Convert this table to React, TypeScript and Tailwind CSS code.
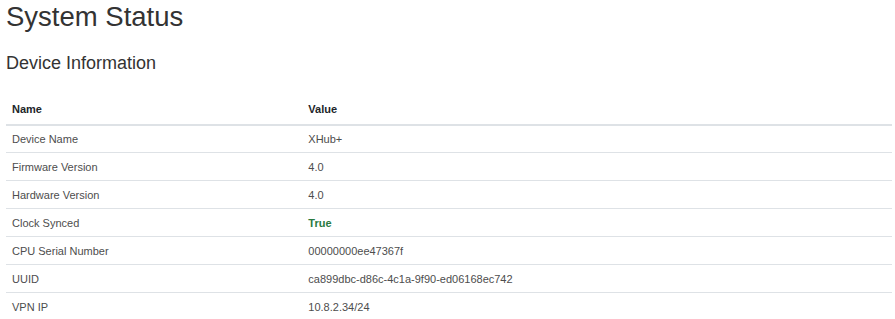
const rows: { name: string; value: string; ok?: boolean }[] = [
  { name: 'Device Name', value: 'XHub+' },
  { name: 'Firmware Version', value: '4.0' },
  { name: 'Hardware Version', value: '4.0' },
  { name: 'Clock Synced', value: 'True', ok: true },
  { name: 'CPU Serial Number', value: '00000000ee47367f' },
  { name: 'UUID', value: 'ca899dbc-d86c-4c1a-9f90-ed06168ec742' },
  { name: 'VPN IP', value: '10.8.2.34/24' },
];

export default function App() {
  return (
    <main className="min-h-screen bg-white pl-[6px] pr-[3px] font-['Liberation_Sans',Arial,sans-serif] text-[#333]">
      <h1 className="text-[27.5px] leading-[1.2] font-normal">System Status</h1>

      {/* Device info */}
      <h3 className="mt-[20px] text-[18px] leading-[1.2] font-normal">Device Information</h3>

      <table className="mt-[20px] w-full border-collapse text-[11px]">
        <thead>
          <tr className="h-[30px] border-b-2 border-[#dee2e6]">
            <th className="w-1/3 px-[6px] pt-[1px] text-left font-bold text-[#212529]">Name</th>
            <th className="px-[6px] pt-[1px] pl-[7px] text-left font-bold text-[#212529]">Value</th>
          </tr>
        </thead>
        <tbody>
          {rows.map((row) => (
            <tr key={row.name} className="h-[28px] border-b border-[#dee2e6]">
              <td className="px-[6px] pt-[1px] text-[#4d4d4d]">{row.name}</td>
              <td className="px-[6px] pt-[1px] pl-[7px] text-[#4d4d4d]">
                {row.ok ? <span className="font-bold text-[#2a7a3f]">{row.value}</span> : row.value}
              </td>
            </tr>
          ))}
        </tbody>
      </table>
    </main>
  );
}
